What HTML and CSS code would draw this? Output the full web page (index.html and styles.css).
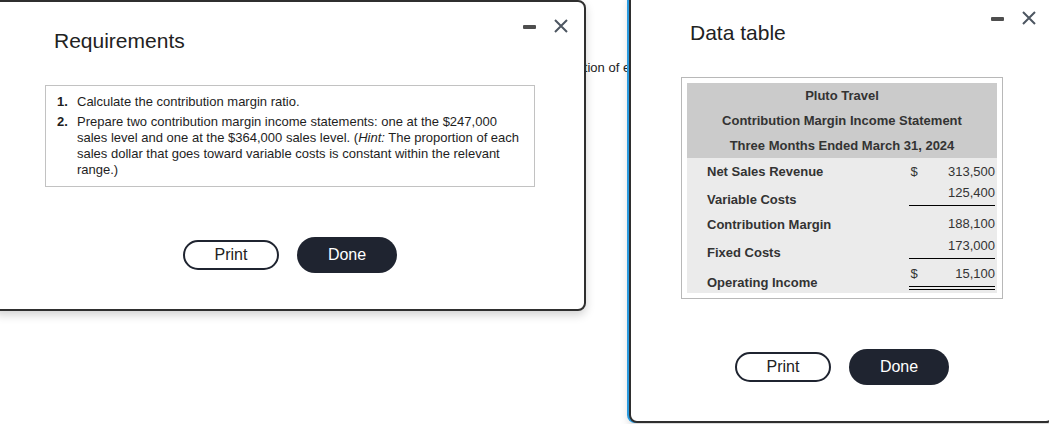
FILE: index.html
```html
<!DOCTYPE html>
<html lang="en">
<head>
<meta charset="utf-8">
<title>Requirements and Data table</title>
<link rel="stylesheet" href="styles.css">
</head>
<body>
<div class="page">computation of each requirement below</div>

<section class="window window--req">
  <header class="win-head">
    <h2 class="win-title">Requirements</h2>
    <div class="win-controls">
      <span class="ctl-min"></span>
      <svg class="ctl-close" viewBox="0 0 14 14" aria-hidden="true"><path d="M1 1L13 13M13 1L1 13"/></svg>
    </div>
  </header>
  <div class="req-box">
    <ol class="req-list">
      <li><span class="req-num">1.</span><span>Calculate the contribution margin ratio.</span></li>
      <li><span class="req-num">2.</span><span>Prepare two contribution margin income statements: one at the $247,000 sales level and one at the $364,000 sales level. (<em>Hint:</em> The proportion of each sales dollar that goes toward variable costs is constant within the relevant range.)</span></li>
    </ol>
  </div>
  <div class="win-actions">
    <button class="btn btn-print">Print</button>
    <button class="btn btn-done">Done</button>
  </div>
</section>

<section class="window window--data">
  <header class="win-head">
    <h2 class="win-title">Data table</h2>
    <div class="win-controls">
      <span class="ctl-min"></span>
      <svg class="ctl-close" viewBox="0 0 14 14" aria-hidden="true"><path d="M1 1L13 13M13 1L1 13"/></svg>
    </div>
  </header>
  <div class="dt">
    <div class="dt-head">
      <div>Pluto Travel</div>
      <div>Contribution Margin Income Statement</div>
      <div>Three Months Ended March 31, 2024</div>
    </div>
    <div class="dt-body">
      <div class="dt-row dt-row--first">
        <div class="dt-label">Net Sales Revenue</div>
        <div class="dt-amt"><span class="cur">$</span><span class="num">313,500</span></div>
      </div>
      <div class="dt-row dt-row--sub">
        <div class="dt-label">Variable Costs</div>
        <div class="dt-amt dt-amt--line"><span class="num">125,400</span></div>
      </div>
      <div class="dt-row">
        <div class="dt-label">Contribution Margin</div>
        <div class="dt-amt"><span class="num">188,100</span></div>
      </div>
      <div class="dt-row dt-row--sub">
        <div class="dt-label">Fixed Costs</div>
        <div class="dt-amt dt-amt--line"><span class="num">173,000</span></div>
      </div>
      <div class="dt-row dt-row--total">
        <div class="dt-label">Operating Income</div>
        <div class="dt-amt dt-amt--double"><span class="cur">$</span><span class="num">15,100</span></div>
      </div>
    </div>
  </div>
  <div class="win-actions">
    <button class="btn btn-print">Print</button>
    <button class="btn btn-done">Done</button>
  </div>
</section>
</body>
</html>
```

FILE: styles.css
```css
html, body {
  margin: 0;
  padding: 0;
}

body {
  position: relative;
  width: 1049px;
  height: 424px;
  overflow: hidden;
  background: #ffffff;
  font-family: "Liberation Sans", Arial, sans-serif;
  color: #222222;
}

.page {
  padding: 60px 0 0 534px;
  font-size: 13px;
  line-height: 16px;
  color: #222222;
  white-space: nowrap;
}

.window {
  position: absolute;
  background: #ffffff;
  border: 2px solid #2f2f2f;
  border-radius: 8px;
  padding: 0 49px 36px 50px;
  box-shadow: 0 4px 10px rgba(0, 0, 0, 0.18);
}

.window--req {
  left: -7px;
  top: 0;
}

.window--data {
  left: 629px;
  top: -8px;
  box-shadow: -2px 0 0 #2a9be0, 0 4px 10px rgba(0, 0, 0, 0.18);
}

.win-head {
  display: flex;
  justify-content: space-between;
  align-items: flex-start;
  margin-right: -33px;
}

.win-title {
  margin: 0;
  padding: 27px 0 0 9px;
  font-size: 21px;
  line-height: 24px;
  font-weight: normal;
  color: #222222;
}

.win-controls {
  display: flex;
  align-items: flex-start;
  gap: 18px;
  margin-top: 17px;
}

.ctl-min {
  display: block;
  width: 13px;
  height: 4px;
  margin-top: 6px;
  background: #4e4e4e;
  border-radius: 1px;
}

.ctl-close {
  display: block;
  width: 14px;
  height: 14px;
  fill: none;
  stroke: #4d5661;
  stroke-width: 2;
}

/* Requirements box */
.req-box {
  margin-top: 32px;
  width: 490px;
  box-sizing: border-box;
  border: 1px solid #c2c2c2;
  padding: 8px 8px 8px 11px;
}

.req-list {
  list-style: none;
  margin: 0;
  padding: 0;
  display: flex;
  flex-direction: column;
  gap: 4px;
  font-size: 13px;
  line-height: 16px;
  color: #1e1e1e;
}

.req-list li {
  display: grid;
  grid-template-columns: 20px 1fr;
}

.req-num {
  font-weight: bold;
}

/* Data table */
.dt {
  margin-top: 32px;
  width: 322px;
  box-sizing: border-box;
  border: 1px solid #b8b8b8;
  padding: 5px;
}

.dt-head {
  background: #cbcbcb;
  text-align: center;
  font-weight: bold;
  font-size: 13px;
  line-height: 25px;
  color: #333333;
}

.dt-body {
  background: #ebebeb;
  font-size: 13px;
  line-height: 16px;
  color: #333333;
}

.dt-row {
  display: grid;
  grid-template-columns: 1fr 86px;
  padding-right: 2px;
  height: 25px;
}

.dt-row--first {
  height: 24px;
}

.dt-row--sub {
  height: 28px;
}

.dt-row--total {
  height: 30px;
}

.dt-label {
  align-self: end;
  padding: 0 0 2px 20px;
  font-weight: bold;
}

.dt-amt {
  align-self: start;
  display: flex;
  padding: 6px 0 0 1.5px;
}

.dt-amt--line {
  padding-top: 2.5px;
  padding-bottom: 4.5px;
  border-bottom: 1px solid #000000;
}

.dt-amt--double {
  padding-top: 2.5px;
  padding-bottom: 4.5px;
  border-bottom: 4px double #000000;
}

.num {
  margin-left: auto;
}

/* Buttons */
.win-actions {
  display: flex;
  justify-content: center;
  align-items: center;
  gap: 18px;
  margin-top: 50px;
}

.btn {
  box-sizing: border-box;
  border-radius: 999px;
  font-family: "Liberation Sans", Arial, sans-serif;
  font-size: 16px;
  padding: 0;
  cursor: pointer;
}

.btn-print {
  width: 96px;
  height: 30px;
  border: 2px solid #1f2430;
  background: #ffffff;
  color: #222222;
}

.btn-done {
  width: 100px;
  height: 36px;
  border: none;
  background: #1f2430;
  color: #ffffff;
}
```
